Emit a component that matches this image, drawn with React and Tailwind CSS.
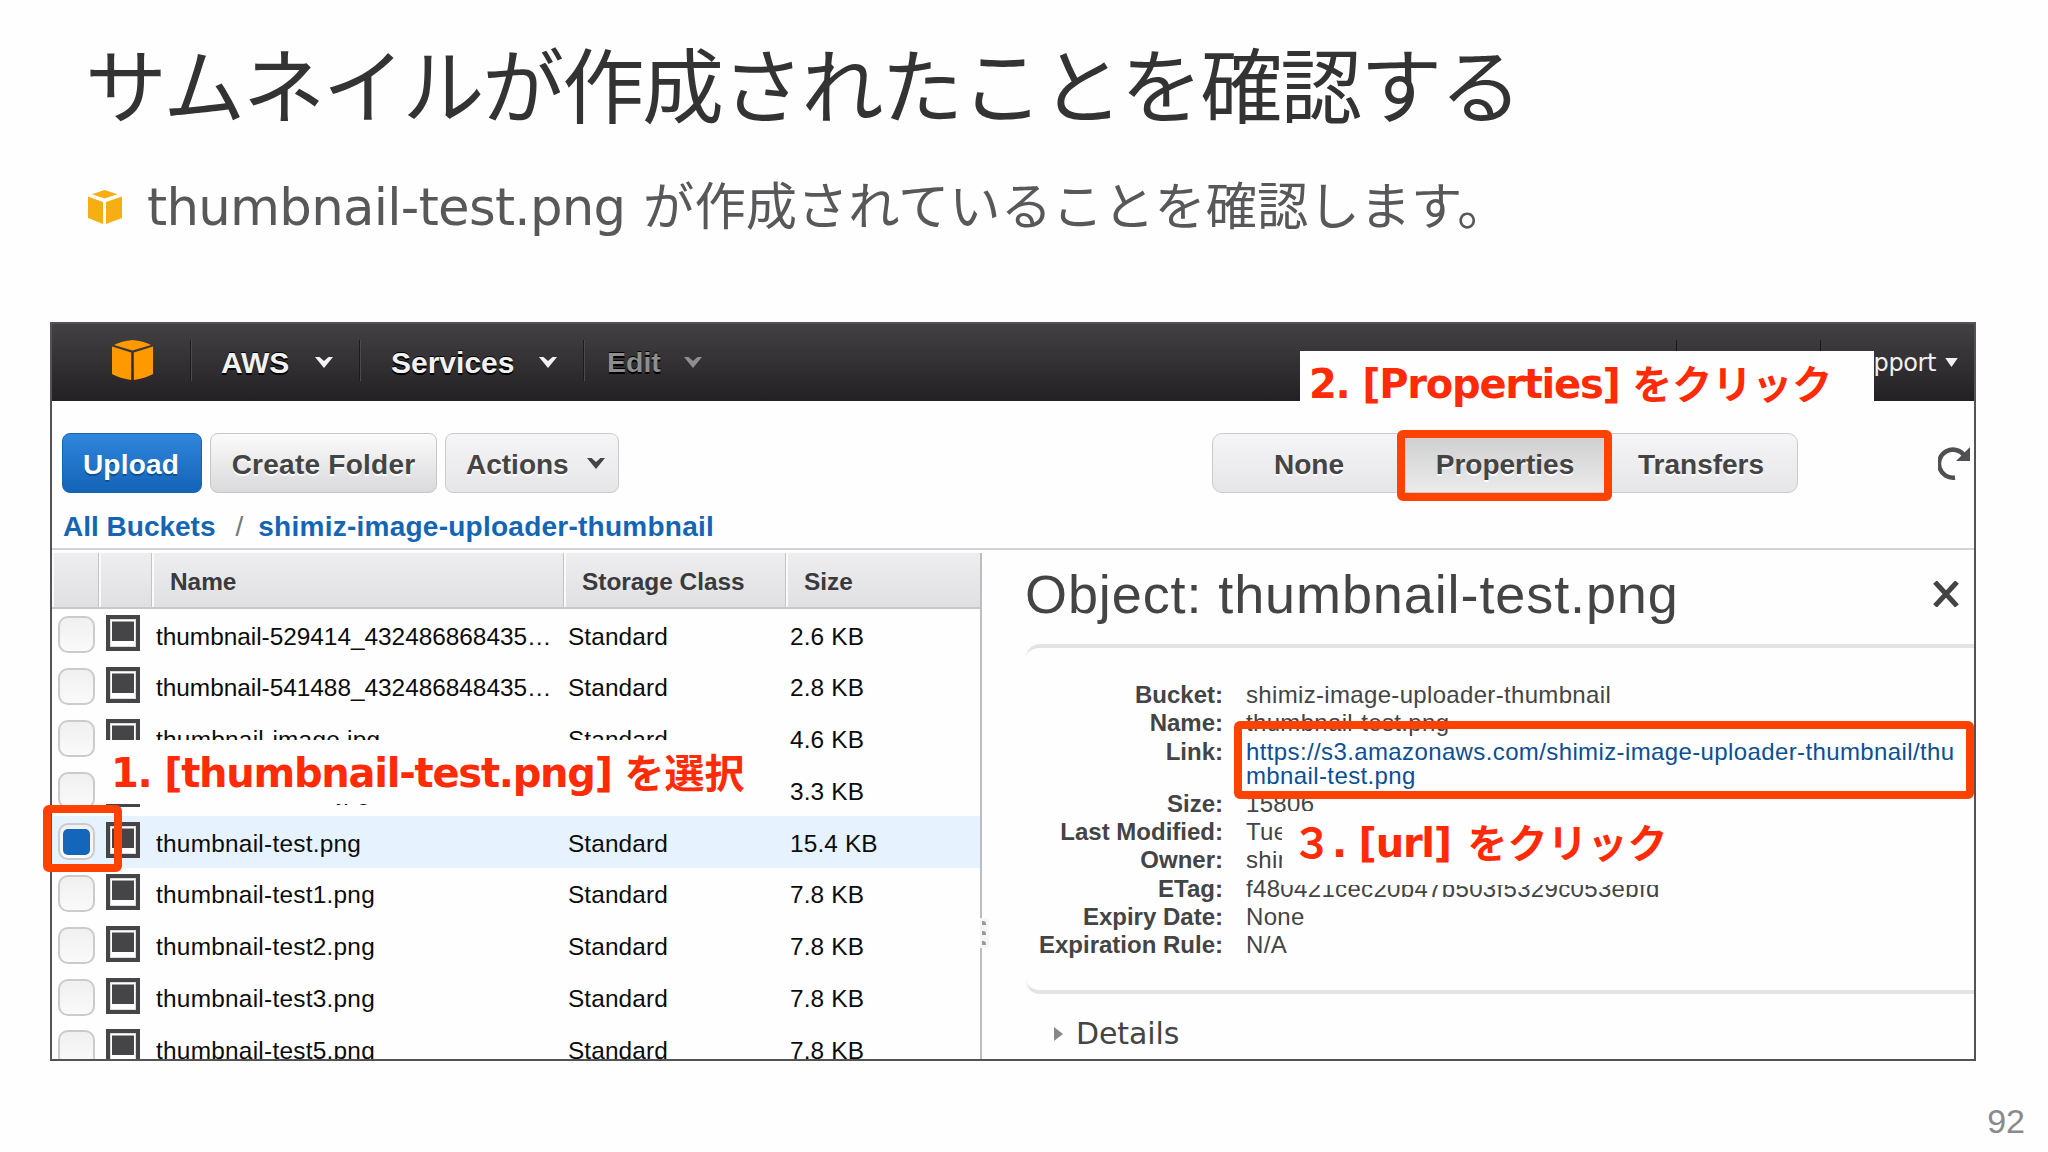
import clsx from 'clsx'

const files = [
  { name: 'thumbnail-529414_432486868435…', size: '2.6 KB', truncated: true },
  { name: 'thumbnail-541488_432486848435…', size: '2.8 KB', truncated: true },
  { name: 'thumbnail-image.jpg', size: '4.6 KB' },
  { name: 'thumbnail-small.jpg', size: '3.3 KB' },
  { name: 'thumbnail-test.png', size: '15.4 KB', selected: true },
  { name: 'thumbnail-test1.png', size: '7.8 KB' },
  { name: 'thumbnail-test2.png', size: '7.8 KB' },
  { name: 'thumbnail-test3.png', size: '7.8 KB' },
  { name: 'thumbnail-test5.png', size: '7.8 KB' },
]

const details = [
  { label: 'Bucket:', value: 'shimiz-image-uploader-thumbnail' },
  { label: 'Name:', value: 'thumbnail-test.png' },
  { label: 'Link:', link: ['https://s3.amazonaws.com/shimiz-image-uploader-thumbnail/thu', 'mbnail-test.png'] },
  { label: 'Size:', value: '15806' },
  { label: 'Last Modified:', value: 'Tue' },
  { label: 'Owner:', value: 'shimiz' },
  { label: 'ETag:', value: 'f480421cec20b47b503f5329c053ebfd' },
  { label: 'Expiry Date:', value: 'None' },
  { label: 'Expiration Rule:', value: 'N/A' },
]

const BulletCube = ({ className }) => (
  <svg viewBox="0 0 34 34" className={className} fill="currentColor">
    <path d="M16.500 0 29.500 4.200 16.500 8.500 4 4.200Z" />
    <path d="M0 6.500 15 12V34L0 28Z" />
    <path d="M34 6.500 18 12V34L34 28Z" />
  </svg>
)

const Cube = ({ className }) => (
  <svg viewBox="0 0 41 40" className={className} fill="currentColor">
    <path d="M20.5 0C28 .8 34 2.500 39 5L20.5 10.500 2 5C7 2.500 13 .8 20.500 0Z" />
    <path d="M0 6.500 19.200 12.500V40C12 39 5 37 0 34Z" />
    <path d="M41 6.500 21.800 12.500V40C29 39 36 37 41 34Z" />
  </svg>
)

const Chevron = ({ className }) => (
  <svg viewBox="0 0 18 12" className={clsx('h-3 w-[18px]', className)} fill="currentColor">
    <path d="M0 1H4.500L9 5 13.500 1H18L9 12Z" />
  </svg>
)

const FileIcon = () => (
  <svg viewBox="0 0 34 36" className="h-9 w-[34px]">
    <rect width="34" height="36" fill="#454447" />
    <rect x="4" y="4" width="26" height="28" fill="#dcdcde" />
    <rect x="5" y="5" width="24" height="26" fill="#ffffff" />
    <rect x="6" y="6.500" width="22" height="19.500" fill="#454447" />
  </svg>
)

const NavItem = ({ label, className, chevronClass }) => (
  <div className={clsx('flex h-[41px] items-center border-l border-[#1d1b1d] pt-[3px] text-[30px] font-bold shadow-[inset_1px_0_0_#4c4a4c] [text-shadow:0_-1px_0_#000,0_2px_0_#000]', className)}>
    <span>{label}</span>
    <Chevron className={chevronClass} />
  </div>
)

const Checkbox = ({ checked }) => (
  <div className="flex h-[37px] w-[37px] items-center justify-center rounded-[10px] border-2 border-[#cbcbcb] bg-linear-to-b from-[#f0f0f0] to-[#fafafa]">
    {checked ? <div className="h-[26px] w-[27px] rounded-[5px] bg-[#1466bb]" /> : null}
  </div>
)

const FileRow = ({ file }) => (
  <div
    className={clsx(
      'grid h-[51.75px] shrink-0 grid-cols-[47px_53px_412px_222px_194px] items-center text-[24.4px] text-[#0c0c0c]',
      file.selected && 'bg-[#e6f2fe]',
    )}
  >
    <div className="pl-[6px]"><Checkbox checked={file.selected} /></div>
    <div className="pb-[3px] pl-[7px]"><FileIcon /></div>
    <div className={clsx('pt-[4px] pl-[4px] whitespace-nowrap', file.truncated ? 'tracking-[-0.02px]' : 'tracking-[0.25px]')}>{file.name}</div>
    <div className="pt-[4px] pl-[4px] tracking-[0.1px]">Standard</div>
    <div className="pt-[4px] pl-[4px] tracking-[0.14px]">{file.size}</div>
  </div>
)

const HeaderCell = ({ children }) => (
  <div className="flex items-center border-r border-[#c3c2c5] pt-[4px] pl-[18px] shadow-[inset_2px_0_0_#fafafa]">{children}</div>
)

const Callout = ({ className, children }) => (
  <div className={clsx('absolute flex bg-[#fefefe] font-bold whitespace-pre text-[#ff2a06]', className)}>{children}</div>
)

const Latin = ({ children }) => (
  <span className="-mt-[1px] font-[DejaVu_Sans,sans-serif] text-[40px] leading-[60px] tracking-[-1.25px]">{children}</span>
)

const Kana = ({ children }) => (
  <span className="-mt-[3px] font-['Noto_Sans_CJK_JP',sans-serif] text-[40px] leading-[60px]">{children}</span>
)

const Highlight = ({ className }) => (
  <div className={clsx('absolute rounded-[6px] border-8 border-[#ff4200]', className)} />
)

const button = 'flex h-[60px] items-center rounded-[8px] border-[1.5px] pt-[4px] text-[28px] font-bold'

const App = () => {
  return (
    <div className="relative h-[1152px] w-[2048px] overflow-hidden bg-[#fefefe] font-['Liberation_Sans',Arial,sans-serif]">
      <h1 className="h-[148px] pt-[23px] pl-[85px] font-['Noto_Sans_CJK_JP',sans-serif] text-[82px] leading-[118px] tracking-[-2.2px] whitespace-nowrap text-[#333333]">
        サムネイルが作成されたことを確認する
      </h1>
      <div className="flex h-[174px] pl-[88px] text-[51.3px] text-[#58585b]">
        <BulletCube className="mt-[42px] h-[34px] w-[34px] text-[#f7ae13]" />
        <p className="ml-[25px] flex leading-[118px] whitespace-pre">
          <span className="font-[DejaVu_Sans,sans-serif] tracking-[-0.7px]">thumbnail-test.png </span>
          <span className="-mt-[4px] ml-[2px] font-['Noto_Sans_CJK_JP',sans-serif]">が作成されていることを確認します。</span>
        </p>
      </div>

      {/* console window */}
      <div className="ml-[50px] flex h-[739px] w-[1926px] flex-col overflow-hidden border-2 border-[#545256] bg-[#fefefe]">
        <div className="flex h-[77px] shrink-0 items-start bg-linear-to-b from-[#434143] to-[#232123] pt-4 text-[#f2f2f2]">
          <Cube className="ml-[60px] h-10 w-[41px] text-[#ff9900]" />
          <NavItem label="AWS" className="ml-[37px] w-[169px] pl-[30px]" chevronClass="ml-[26px]" />
          <NavItem label="Services" className="w-[224px] pl-[31px]" chevronClass="ml-[25px]" />
          <NavItem label="Edit" className="w-[200px] pl-[23px] text-[#8f8d8f] !text-[28.5px]" chevronClass="ml-[23px]" />
          <div className="ml-auto h-[41px] w-[144px] border-l border-[#1a181a]" />
          <div className="flex h-[41px] w-[154px] items-center justify-end border-l border-[#1a181a] pt-[4px] pr-[16px] font-[DejaVu_Sans,sans-serif] text-[24px] tracking-[-0.4px]">
            <span>Support</span>
            <svg viewBox="0 0 14 10" className="ml-[9px] h-[9px] w-[13px]" fill="currentColor">
              <path d="M0 0H14L7 10Z" />
            </svg>
          </div>
        </div>

        <div className="flex h-[149px] shrink-0 flex-col border-b-2 border-[#d3d3d5] pt-8">
          <div className="flex h-[60px] items-center pl-[10px]">
            <button className={clsx(button, 'w-[140px] justify-center border-[#1663ae] bg-linear-to-b from-[#2f86dc] to-[#1464b8] pr-[2px] tracking-[0.2px] text-white [text-shadow:0_2px_0_#0f4f94]')}>Upload</button>
            <button className={clsx(button, 'ml-2 w-[227px] justify-center border-[#c6c6c8] bg-linear-to-b from-[#fbfbfb] to-[#dadadc] tracking-[0.25px] text-[#444444] [text-shadow:0_2px_0_#fff]')}>Create Folder</button>
            <button className={clsx(button, 'ml-2 w-[174px] border-[#cbcbcd] bg-linear-to-b from-[#f5f4f6] to-[#e6e5e7] pl-5 text-[#444444] [text-shadow:0_2px_0_#fff]')}>
              Actions
              <Chevron className="mb-[5px] ml-[18px]" />
            </button>
            <div className="ml-[593px] flex h-[60px] w-[586px] rounded-[10px] border-[1.5px] border-[#cbcbcd] bg-linear-to-b from-[#f5f4f6] to-[#e6e5e7] text-[28px] font-bold text-[#444444] [text-shadow:0_2px_0_#fff]">
              <div className="flex w-[190px] items-center pt-[4px] pl-[61px]">None</div>
              <div className="flex w-[204px] items-center justify-center bg-linear-to-b from-[#cdcecd] to-[#ebebeb] pt-[4px]">Properties</div>
              <div className="flex items-center pt-[4px] pl-[31px]">Transfers</div>
            </div>
            <svg viewBox="0 0 33 34" className="ml-[140px] h-[34px] w-[33px] shrink-0">
              <path d="M17 31.500A14 14 0 1 1 26 9" fill="none" stroke="#505052" strokeWidth="4.500" />
              <path d="M32 1V15H18Z" fill="#505052" />
            </svg>
          </div>
          <div className="flex h-[55px] items-center pt-[13px] pl-[11px] text-[28px] font-bold whitespace-pre text-[#1565b5]">
            <span>All Buckets</span>
            <span className="ml-[20px] font-normal text-[#77777a]">/</span>
            <span className="ml-[15px] tracking-[0.25px]">shimiz-image-uploader-thumbnail</span>
          </div>
        </div>

        <div className="flex min-h-0 flex-1">
          <div className="mt-[3px] flex w-[930px] shrink-0 flex-col overflow-hidden border-r-2 border-[#bdbcc0]">
            <div className="grid h-[56px] shrink-0 grid-cols-[47px_53px_412px_222px_196px] border-b-2 border-[#c8c7ca] bg-linear-to-b from-[#eeeef0] to-[#e0dfe2] text-[24.4px] font-bold text-[#3a3a3c]">
              <HeaderCell />
              <HeaderCell />
              <HeaderCell>Name</HeaderCell>
              <HeaderCell>Storage Class</HeaderCell>
              <HeaderCell>Size</HeaderCell>
            </div>
            {files.map((file) => (
              <FileRow key={file.name} file={file} />
            ))}
          </div>

          <div className="flex min-w-0 flex-1 flex-col overflow-hidden text-[#444444]">
            <div className="flex h-[94px] shrink-0 items-center justify-between pr-[15px] pb-[6px] pl-[43px]">
              <h2 className="text-[54px] leading-[64px] tracking-[0.9px] whitespace-nowrap">Object: thumbnail-test.png</h2>
              <svg viewBox="0 0 26 26" className="h-[26px] w-[26px]" stroke="#444444" strokeWidth="5">
                <path d="M2 1 24 25M24 1 2 25" />
              </svg>
            </div>
            <div className="ml-[44px] flex h-[350px] shrink-0 flex-col rounded-l-[14px] border-y-4 border-[#e3e2e6] pt-[33px] text-[24px]">
              {details.map((row) => (
                <div key={row.label} className="flex leading-[28.3px]">
                  <div className="w-[197px] shrink-0 text-right font-bold">{row.label}</div>
                  {row.link ? (
                    <a className="ml-[23px] flex flex-col pb-[4px] tracking-[0.38px] whitespace-nowrap text-[#0b4f95]">
                      <span className="leading-[28.3px]">{row.link[0]}</span>
                      <span className="leading-[20px]">{row.link[1]}</span>
                    </a>
                  ) : (
                    <div className="ml-[23px] tracking-[0.33px] whitespace-nowrap">{row.value}</div>
                  )}
                </div>
              ))}
            </div>
            <div className="flex items-center pt-[17px] pl-[72px]">
              <svg viewBox="0 0 9 14" className="h-[14px] w-[9px]" fill="#88888b">
                <path d="M0 0 9 7 0 14Z" />
              </svg>
              <span className="ml-[13px] font-[DejaVu_Sans,sans-serif] text-[30px] tracking-[-0.1px]">Details</span>
            </div>
          </div>
        </div>
      </div>

      <div className="pt-[41px] pr-[23px] text-right text-[34px] leading-[38px] text-[#8a8a8c]">92</div>

      {/* drag handle on the pane splitter */}
      <div className="absolute top-[918px] left-[980px] flex h-[30px] w-[9px] flex-col justify-around rounded-r-[2px] bg-[#f6f6f6] pl-[2px]">
        <i className="h-[4px] w-[4px] rounded-tr-[3px] bg-[#98989a]" />
        <i className="h-[4px] w-[4px] rounded-tr-[3px] bg-[#98989a]" />
        <i className="h-[4px] w-[4px] rounded-tr-[3px] bg-[#98989a]" />
      </div>

      <Callout className="top-[740px] left-[97px] h-[64px] w-[670px] pt-[4px] pl-[14px]">
        <Latin>1. [thumbnail-test.png] </Latin>
        <Kana>を選択</Kana>
      </Callout>
      <Callout className="top-[351px] left-[1300px] h-[64px] w-[574px] pt-[4px] pl-[9px]">
        <Latin>2. [Properties] </Latin>
        <Kana>をクリック</Kana>
      </Callout>
      <Callout className="top-[811px] left-[1282px] h-[74px] w-[420px] pt-[3px] pl-[10px]">
        <Kana>３</Kana>
        <Latin>. [url] </Latin>
        <span className="w-[4px]" />
        <Kana>をクリック</Kana>
      </Callout>

      <Highlight className="top-[430px] left-[1397px] h-[71px] w-[215px]" />
      <Highlight className="top-[805px] left-[43px] h-[67px] w-[79px]" />
      <Highlight className="top-[721px] left-[1234px] h-[78px] w-[740px]" />
    </div>
  )
}

export default App
